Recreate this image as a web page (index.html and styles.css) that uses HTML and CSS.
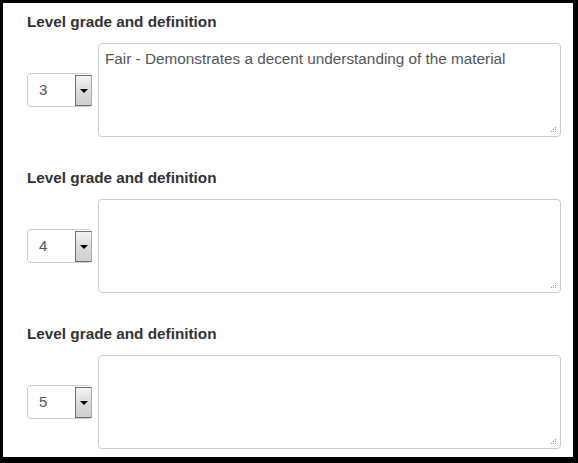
FILE: index.html
```html
<!DOCTYPE html>
<html>
<head>
<meta charset="utf-8">
<link rel="stylesheet" href="styles.css">
</head>
<body>
<div class="frame">
  <div class="group">
    <div class="label">Level grade and definition</div>
    <div class="row">
      <div class="select"><span class="val">3</span><span class="btn"><span class="arrow"></span></span></div>
      <div class="ta-wrap">
        <textarea class="ta">Fair - Demonstrates a decent understanding of the material</textarea>
        <svg class="grip" width="6" height="6" viewBox="0 0 6 6"><rect x="4" y="0" width="1" height="1"/><rect x="2" y="2" width="1" height="1"/><rect x="4" y="2" width="1" height="1"/><rect x="0" y="4" width="1" height="1"/><rect x="2" y="4" width="1" height="1"/><rect x="4" y="4" width="1" height="1"/></svg>
      </div>
    </div>
  </div>
  <div class="group">
    <div class="label">Level grade and definition</div>
    <div class="row">
      <div class="select"><span class="val">4</span><span class="btn"><span class="arrow"></span></span></div>
      <div class="ta-wrap">
        <textarea class="ta"></textarea>
        <svg class="grip" width="6" height="6" viewBox="0 0 6 6"><rect x="4" y="0" width="1" height="1"/><rect x="2" y="2" width="1" height="1"/><rect x="4" y="2" width="1" height="1"/><rect x="0" y="4" width="1" height="1"/><rect x="2" y="4" width="1" height="1"/><rect x="4" y="4" width="1" height="1"/></svg>
      </div>
    </div>
  </div>
  <div class="group">
    <div class="label">Level grade and definition</div>
    <div class="row">
      <div class="select"><span class="val">5</span><span class="btn"><span class="arrow"></span></span></div>
      <div class="ta-wrap">
        <textarea class="ta"></textarea>
        <svg class="grip" width="6" height="6" viewBox="0 0 6 6"><rect x="4" y="0" width="1" height="1"/><rect x="2" y="2" width="1" height="1"/><rect x="4" y="2" width="1" height="1"/><rect x="0" y="4" width="1" height="1"/><rect x="2" y="4" width="1" height="1"/><rect x="4" y="4" width="1" height="1"/></svg>
      </div>
    </div>
  </div>
</div>
</body>
</html>
```
FILE: styles.css
```css
html, body {
  margin: 0;
  padding: 0;
  background: #000;
}
.frame {
  box-sizing: border-box;
  width: 578px;
  height: 463px;
  border-style: solid;
  border-color: #000;
  border-width: 3px 5px 6px 3px;
  background: #fff;
  padding: 9px 12px 0 24px;
  font-family: "Liberation Sans", Arial, sans-serif;
  font-size: 15.3px;
  color: #333;
  overflow: hidden;
}
.group {
  margin-bottom: 31px;
}
.label {
  font-weight: bold;
  line-height: 20px;
  margin-bottom: 11px;
  color: #333;
}
.row {
  display: flex;
  align-items: center;
  gap: 6px;
}
.select {
  box-sizing: border-box;
  width: 65px;
  height: 34px;
  border: 1px solid #ccc;
  border-radius: 4px;
  display: flex;
  align-items: center;
  padding: 1px 0 1px 0;
  background: #fff;
}
.val {
  flex: 1;
  padding-left: 11px;
  color: #555;
  font-size: 15px;
  line-height: 20px;
}
.btn {
  box-sizing: border-box;
  width: 17px;
  height: 31px;
  border: 1px solid #707070;
  border-right-color: #aaa;
  background: linear-gradient(#f4f4f4, #dcdcdc 50%, #cfcfcf);
  display: flex;
  align-items: center;
  justify-content: center;
  margin-right: -1px;
}
.arrow {
  width: 0;
  height: 0;
  border-left: 4px solid transparent;
  border-right: 4px solid transparent;
  border-top: 4px solid #000;
  margin-top: 1px;
}
.ta-wrap {
  position: relative;
  flex: 1;
  height: 94px;
}
.ta {
  box-sizing: border-box;
  display: block;
  width: 100%;
  height: 94px;
  margin: 0;
  border: 1px solid #ccc;
  border-radius: 4px;
  padding: 5px 6px;
  font-family: "Liberation Sans", Arial, sans-serif;
  font-size: 15.3px;
  line-height: 20px;
  color: #555;
  resize: none;
  outline: none;
  background: #fff;
}
.grip {
  position: absolute;
  right: 4px;
  bottom: 4px;
  fill: #9a9a9a;
}
```
